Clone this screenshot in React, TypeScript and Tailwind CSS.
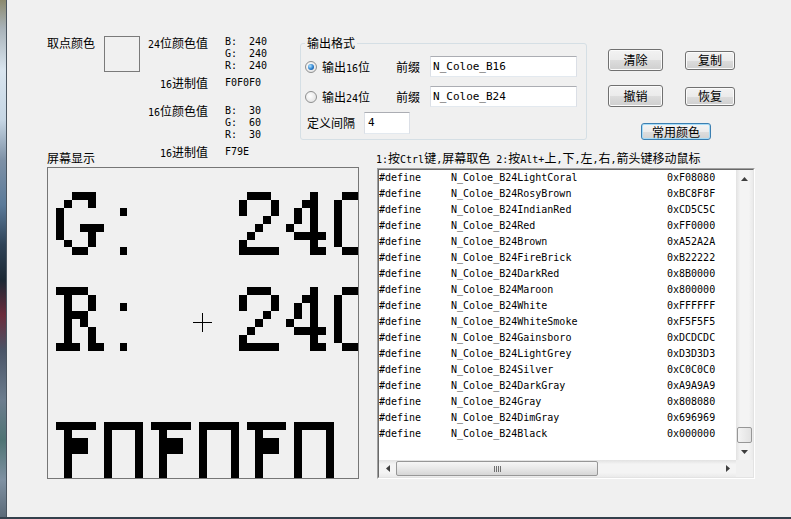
import React from "react";

function Mixed({ s }: { s: string }) {
  const parts = s.split(/([\x20-\x7E]+)/).filter((p) => p.length > 0);
  return (
    <>
      {parts.map((p, i) =>
        /^[\x20-\x7E]+$/.test(p) ? (
          <span key={i} className="font-['DejaVu_Sans_Mono',monospace] text-[10px] leading-[0px] whitespace-pre">
            {p}
          </span>
        ) : (
          <span key={i}>{p}</span>
        )
      )}
    </>
  );
}

const SC = 310 / 39;
const P = (c: number) => Math.round(c * SC);

type Cell = [number, number];
function shift(cells: Cell[], dc: number, dr: number): Cell[] {
  return cells.map(([c, r]) => [c + dc, r + dr] as Cell);
}
function range(a: number, b: number) {
  const out: number[] = [];
  for (let i = a; i <= b; i++) out.push(i);
  return out;
}

const G: Cell[] = [
  [3, 0], [4, 0], [5, 0],
  [2, 1], [5, 1],
  [1, 2], [1, 3],
  [1, 4], [4, 4], [5, 4], [6, 4],
  [1, 5], [5, 5],
  [2, 6], [5, 6],
  [3, 7], [4, 7],
];
const R: Cell[] = [
  [1, 0], [2, 0], [3, 0], [4, 0],
  [2, 1], [5, 1],
  [2, 2], [5, 2],
  [2, 3], [3, 3], [4, 3],
  [2, 4], [4, 4],
  [2, 5], [5, 5],
  [2, 6], [5, 6],
  [1, 7], [2, 7], [3, 7], [5, 7], [6, 7],
];
const COLON: Cell[] = [[9, 2], [9, 7]];
const TWO: Cell[] = [
  [1, 0], [2, 0], [3, 0],
  [0, 1], [4, 1],
  [0, 2], [4, 2],
  [3, 3], [2, 4], [1, 5], [0, 6],
  [0, 7], [1, 7], [2, 7], [3, 7], [4, 7],
];
const FOUR: Cell[] = [
  [3, 0],
  [2, 1], [3, 1],
  [1, 2], [3, 2],
  [1, 3], [3, 3],
  [0, 4], [3, 4],
  [1, 5], [2, 5], [3, 5], [4, 5],
  [3, 6],
  [3, 7], [4, 7],
];
const ZERO: Cell[] = [
  [1, 0], [2, 0], [3, 0],
  ...range(1, 6).map((r) => [0, r] as Cell),
  ...range(1, 6).map((r) => [4, r] as Cell),
  [1, 7], [2, 7], [3, 7],
];
const F: Cell[] = [
  ...range(0, 4).map((c) => [c, 0] as Cell),
  ...range(1, 6).map((r) => [1, r] as Cell),
  [2, 2], [3, 2], [2, 3], [3, 3],
];
const PI: Cell[] = [
  ...range(0, 4).map((c) => [c, 0] as Cell),
  ...range(1, 6).map((r) => [0, r] as Cell),
  ...range(1, 6).map((r) => [4, r] as Cell),
];

function num240(row: number): Cell[] {
  return [...shift(TWO, 24, row), ...shift(FOUR, 30, row), ...shift(ZERO, 36, row)];
}

const ALL: Cell[] = [
  ...shift(G, 0, 3),
  ...shift(COLON, 0, 3),
  ...num240(3),
  ...shift(R, 0, 15),
  ...shift(COLON, 0, 15),
  ...num240(15),
  ...shift(F, 1, 32),
  ...shift(PI, 7, 32),
  ...shift(F, 13, 32),
  ...shift(PI, 19, 32),
  ...shift(F, 25, 32),
  ...shift(PI, 31, 32),
];

function ScreenBox() {
  return (
    <div className="w-[312px] h-[312px] border border-[#767676] bg-[#f0f0f0] shrink-0">
      <svg width="310" height="310" viewBox="0 0 310 310" shapeRendering="crispEdges" className="block">
        {ALL.map(([c, r], i) => (
          <rect key={i} x={P(c)} y={P(r)} width={P(c + 1) - P(c)} height={P(r + 1) - P(r)} fill="#000" />
        ))}
        <rect x="145" y="154" width="19" height="1" fill="#000" />
        <rect x="154" y="145" width="1" height="19" fill="#000" />
      </svg>
    </div>
  );
}

function Btn({ label, cls, def }: { label: string; cls: string; def?: boolean }) {
  return (
    <div
      className={
        "flex items-center justify-center rounded-[3px] border leading-[12px] " +
        (def
          ? "border-[#3c7fb1] shadow-[inset_0_0_0_1px_#a6dcf8] bg-[linear-gradient(to_bottom,#f4f4f4_0%,#ececec_50%,#dedede_50%,#d2d2d2_100%)] "
          : "border-[#707070] shadow-[inset_0_0_0_1px_#fbfbfb] bg-[linear-gradient(to_bottom,#f2f2f2_0%,#ebebeb_50%,#dddddd_50%,#cfcfcf_100%)] ") +
        cls
      }
    >
      {label}
    </div>
  );
}

function Radio({ checked }: { checked?: boolean }) {
  return (
    <div className="w-[12px] h-[12px] rounded-full border border-[#8e8f8f] bg-[radial-gradient(circle_at_40%_40%,#ffffff,#dcdcdc)] flex items-center justify-center shrink-0">
      {checked && (
        <div className="w-[6px] h-[6px] rounded-full bg-[radial-gradient(circle_at_35%_35%,#b4e6ff,#2a7fcf_55%,#0d3f7a)]" />
      )}
    </div>
  );
}

function TextBox({ value, cls }: { value: string; cls: string }) {
  return (
    <div
      className={
        "border border-t-[#abadb3] border-l-[#dbdfe6] border-r-[#dbdfe6] border-b-[#e3e9ef] bg-white flex items-center pl-[2px] font-['DejaVu_Sans_Mono',monospace] text-[11px] whitespace-pre " +
        cls
      }
    >
      {value}
    </div>
  );
}

function TriUp() {
  return (
    <svg width="7" height="4" viewBox="0 0 7 4">
      <polygon points="3.5,0 7,4 0,4" fill="#3f3f3f" />
    </svg>
  );
}
function TriDown() {
  return (
    <svg width="7" height="4" viewBox="0 0 7 4">
      <polygon points="0,0 7,0 3.5,4" fill="#3f3f3f" />
    </svg>
  );
}
function TriLeft() {
  return (
    <svg width="4" height="7" viewBox="0 0 4 7">
      <polygon points="4,0 4,7 0,3.5" fill="#3f3f3f" />
    </svg>
  );
}
function TriRight() {
  return (
    <svg width="4" height="7" viewBox="0 0 4 7">
      <polygon points="0,0 4,3.5 0,7" fill="#3f3f3f" />
    </svg>
  );
}

const ROWS: [string, string][] = [
  ["LightCoral", "0xF08080"],
  ["RosyBrown", "0xBC8F8F"],
  ["IndianRed", "0xCD5C5C"],
  ["Red", "0xFF0000"],
  ["Brown", "0xA52A2A"],
  ["FireBrick", "0xB22222"],
  ["DarkRed", "0x8B0000"],
  ["Maroon", "0x800000"],
  ["White", "0xFFFFFF"],
  ["WhiteSmoke", "0xF5F5F5"],
  ["Gainsboro", "0xDCDCDC"],
  ["LightGrey", "0xD3D3D3"],
  ["Silver", "0xC0C0C0"],
  ["DarkGray", "0xA9A9A9"],
  ["Gray", "0x808080"],
  ["DimGray", "0x696969"],
  ["Black", "0x000000"],
];

function ListBox() {
  return (
    <div className="ml-[18px] mt-[1px] w-[378px] h-[311px] border border-t-[#a0a0a0] border-l-[#a0a0a0] border-r-white border-b-white shrink-0">
      <div className="h-full border border-t-[#696969] border-l-[#696969] border-r-[#e3e3e3] border-b-[#e3e3e3] bg-white flex flex-col">
        <div className="flex flex-1 min-h-0">
          <div className="flex-1 overflow-hidden">
            {ROWS.map(([n, v]) => (
              <div
                key={n}
                className="h-[16px] grid grid-cols-[72px_216px_auto] items-center font-['DejaVu_Sans_Mono',monospace] text-[10px] leading-[16px] whitespace-pre"
              >
                <span>#define</span>
                <span>{"N_Coloe_B24" + n}</span>
                <span>{v}</span>
              </div>
            ))}
          </div>
          <div className="w-[17px] flex flex-col bg-[linear-gradient(to_right,#e2e2e2,#f4f4f4_25%,#f4f4f4_75%,#eaeaea)]">
            <div className="h-[17px] flex items-center justify-center">
              <TriUp />
            </div>
            <div className="flex-1 flex flex-col justify-end px-[1px]">
              <div className="h-[16px] rounded-[2px] border border-[#979797] bg-[linear-gradient(to_right,#f4f4f4,#e2e2e2)]" />
            </div>
            <div className="h-[17px] flex items-center justify-center">
              <TriDown />
            </div>
          </div>
        </div>
        <div className="flex h-[17px]">
          <div className="flex-1 flex bg-[linear-gradient(to_bottom,#e2e2e2,#f4f4f4_25%,#f4f4f4_75%,#eaeaea)]">
            <div className="w-[17px] flex items-center justify-center">
              <TriLeft />
            </div>
            <div className="flex-1 flex py-[1px]">
              <div className="w-[202px] rounded-[2px] border border-[#979797] bg-[linear-gradient(to_bottom,#f6f6f6,#e8e8e8_50%,#d6d6d6)] flex items-center justify-center">
                <svg width="7" height="6" viewBox="0 0 7 6">
                  <rect x="0" y="0" width="1" height="6" fill="#707070" />
                  <rect x="2" y="0" width="1" height="6" fill="#707070" />
                  <rect x="4" y="0" width="1" height="6" fill="#707070" />
                  <rect x="6" y="0" width="1" height="6" fill="#707070" />
                </svg>
              </div>
            </div>
            <div className="w-[17px] flex items-center justify-center">
              <TriRight />
            </div>
          </div>
          <div className="w-[17px] bg-[#f0f0f0]" />
        </div>
      </div>
    </div>
  );
}

function MonoLines({ lines, cls }: { lines: string[]; cls?: string }) {
  return (
    <div className={"font-['DejaVu_Sans_Mono',monospace] text-[10px] leading-[12px] whitespace-pre " + (cls || "")}>
      {lines.map((l) => (
        <div key={l}>{l}</div>
      ))}
    </div>
  );
}

function InfoBlock() {
  return (
    <div className="w-[253px] flex shrink-0">
      <div className="w-[101px] flex flex-col justify-between">
        <div className="flex items-start">
          <div className="w-[57px] mt-[1px] whitespace-nowrap">取点颜色</div>
          <div className="w-[36px] h-[36px] border border-[#7a7a7a] bg-[#f0f0f0]" />
        </div>
        <div className="whitespace-nowrap">屏幕显示</div>
      </div>
      <div className="grid grid-cols-[60px_auto] gap-x-[17px] pb-[6px] items-start">
        <div className="text-right mt-[1px] whitespace-nowrap h-[12px]">
          <Mixed s="24位颜色值" />
        </div>
        <MonoLines lines={["B:  240", "G:  240", "R:  240"]} />
        <div className="text-right mt-[5px] whitespace-nowrap h-[12px]">
          <Mixed s="16进制值" />
        </div>
        <MonoLines lines={["F0F0F0"]} cls="mt-[5px]" />
        <div className="text-right mt-[16px] whitespace-nowrap h-[12px]">
          <Mixed s="16位颜色值" />
        </div>
        <MonoLines lines={["B:  30", "G:  60", "R:  30"]} cls="mt-[16px]" />
        <div className="text-right mt-[5px] whitespace-nowrap h-[12px]">
          <Mixed s="16进制值" />
        </div>
        <MonoLines lines={["F79E"]} cls="mt-[5px]" />
      </div>
    </div>
  );
}

function OutputGroup() {
  return (
    <fieldset className="mt-[1px] w-[287px] border border-[#d5dfe5] rounded-[3px] pl-[4px] pb-[5px] shrink-0">
      <legend className="px-[2px] leading-[12px]">输出格式</legend>
      <div className="mt-[7px] h-[21px] flex items-center">
        <Radio checked />
        <span className="ml-[5px] w-[48px] whitespace-nowrap">
          <Mixed s="输出16位" />
        </span>
        <span className="ml-[26px] whitespace-nowrap">前缀</span>
        <TextBox value="N_Coloe_B16" cls="ml-[10px] w-[147px] h-[21px]" />
      </div>
      <div className="mt-[9px] h-[21px] flex items-center">
        <Radio />
        <span className="ml-[5px] w-[48px] whitespace-nowrap">
          <Mixed s="输出24位" />
        </span>
        <span className="ml-[26px] whitespace-nowrap">前缀</span>
        <TextBox value="N_Coloe_B24" cls="ml-[10px] w-[147px] h-[21px]" />
      </div>
      <div className="mt-[5px] h-[22px] flex items-center">
        <span className="ml-[2px] whitespace-nowrap">定义间隔</span>
        <TextBox value="4" cls="ml-[9px] w-[46px] h-[22px] pl-[3px]" />
      </div>
    </fieldset>
  );
}

function Buttons() {
  return (
    <div className="ml-[21px] mt-[13px] flex flex-col">
      <div className="flex items-center">
        <Btn label="清除" cls="w-[55px] h-[22px]" />
        <Btn label="复制" cls="ml-[22px] w-[50px] h-[19px]" />
      </div>
      <div className="flex items-center mt-[14px]">
        <Btn label="撤销" cls="w-[55px] h-[22px]" />
        <Btn label="恢复" cls="ml-[22px] w-[50px] h-[19px]" />
      </div>
      <div className="mt-[16px] ml-[33px] flex">
        <Btn label="常用颜色" cls="w-[70px] h-[17px]" def />
      </div>
    </div>
  );
}

export default function App() {
  return (
    <div className="w-[791px] h-[519px] bg-[#f0f0f0] flex flex-col overflow-hidden font-['Noto_Sans_CJK_SC',sans-serif] text-[12px] leading-[12px] text-black">
      <div className="flex flex-1 min-h-0">
        <div className="w-[6px] bg-[linear-gradient(to_bottom,#8c8a6e_0px,#a8b2b8_28px,#d9e5ef_70px,#c6d6e4_120px,#7e91a6_160px,#5b7a99_205px,#2e4256_245px,#1b2834_280px,#6b2c3c_315px,#4a5466_350px,#6c7d8e_400px,#4f7474_440px,#7f91a2_480px,#5b6a78_517px)]" />
        <div className="w-px bg-[#4a5560]" />
        <div className="flex-1 pl-[40px] pt-[36px] flex flex-col">
          <div className="flex items-start">
            <InfoBlock />
            <div className="flex flex-col">
              <div className="flex items-start">
                <OutputGroup />
                <Buttons />
              </div>
              <div className="ml-[76px] mt-[12px] whitespace-nowrap h-[12px]">
                <Mixed s="1:按Ctrl键,屏幕取色 2:按Alt+上,下,左,右,箭头键移动鼠标" />
              </div>
            </div>
          </div>
          <div className="flex items-start mt-[3px]">
            <ScreenBox />
            <ListBox />
          </div>
        </div>
      </div>
      <div className="h-[2px] bg-[#34404c]" />
    </div>
  );
}
